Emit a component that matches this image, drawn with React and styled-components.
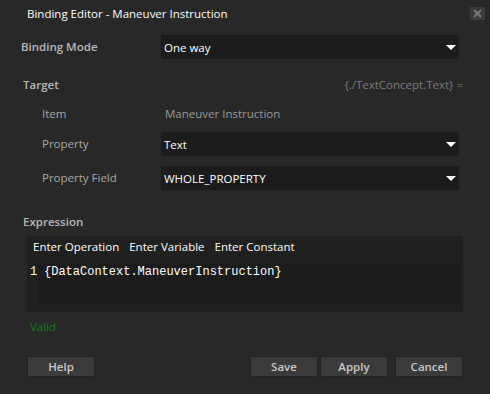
import styled, { createGlobalStyle } from "styled-components";

const Global = createGlobalStyle`
  html, body {
    margin: 0;
    padding: 0;
    background: #282828;
  }
  body {
    font-family: "Open Sans", "Noto Sans", sans-serif;
    font-size: 11.5px;
  }
`;

const Window = styled.div`
  width: 490px;
  height: 394px;
  background: #282828;
  display: flex;
  flex-direction: column;
  box-sizing: border-box;
`;

const TitleBar = styled.div`
  height: 27px;
  display: flex;
  align-items: center;
  justify-content: space-between;
  padding: 0 5px 1px 27px;
  color: #ffffff;
  font-size: 11.5px;
`;

const CloseBox = styled.div`
  width: 15px;
  height: 13px;
  background: #3a3a3a;
  display: flex;
  align-items: center;
  justify-content: center;
  margin-bottom: 1px;
`;

const Body = styled.div`
  display: flex;
  flex-direction: column;
  padding: 7px 27px 0 21px;
`;

const Row = styled.div`
  display: flex;
  align-items: center;
  height: ${(p) => p.$h || 24}px;
  margin-top: ${(p) => p.$mt || 0}px;
  padding-left: ${(p) => p.$indent || 0}px;
`;

const Label = styled.div`
  width: ${(p) => p.$w}px;
  flex-shrink: 0;
  margin-top: -1px;
  color: ${(p) => (p.$strong ? "#b8b8b8" : "#a8a8a8")};
  font-weight: ${(p) => (p.$strong ? 600 : 400)};
`;

const Value = styled.div`
  color: #9a9a9a;
  padding-left: 4px;
  margin-top: -1px;
`;

const Hint = styled.div`
  margin-left: auto;
  margin-top: -1px;
  color: #7c7c7c;
`;

const Select = styled.div`
  flex: 1;
  height: 24px;
  background: #1c1c1c;
  color: #ffffff;
  display: flex;
  align-items: center;
  justify-content: space-between;
  padding: 0 3px 0 3px;
  box-sizing: border-box;
  margin-right: 4px;
`;

const Caret = styled.span`
  width: 0;
  height: 0;
  border-left: 5px solid transparent;
  border-right: 5px solid transparent;
  border-top: 5px solid #ffffff;
  margin-top: 1px;
`;

const ExprBox = styled.div`
  margin: 2px 0 0 6px;
  height: 76px;
  background: #202020;
  display: flex;
  flex-direction: column;
  padding: 0 3px 8px 3px;
  box-sizing: border-box;
`;

const ExprToolbar = styled.div`
  height: 28px;
  display: flex;
  align-items: flex-start;
  padding: 3px 0 0 3px;
  box-sizing: border-box;
  gap: 10px;
  color: #ffffff;
`;

const Editor = styled.div`
  flex: 1;
  display: flex;
  font-family: "Liberation Mono", "Courier New", monospace;
  font-size: 12px;
  color: #ffffff;
`;

const Gutter = styled.div`
  width: 9px;
  padding-top: 1px;
  background: #202020;
`;

const Code = styled.div`
  flex: 1;
  background: #1c1c1c;
  padding: 1px 0 0 5px;
`;

const Valid = styled.div`
  color: #15801a;
  margin: 8px 0 0 9px;
  height: 14px;
  line-height: 14px;
`;

const ButtonBar = styled.div`
  display: flex;
  margin: 22px 0 0 6px;
`;

const Button = styled.button`
  width: 68px;
  height: 21px;
  background: #3b3b3b;
  border: 1px solid #222;
  border-radius: 2px;
  color: #c8c8c8;
  font-family: "Open Sans", "Noto Sans", sans-serif;
  font-size: 11.5px;
  font-weight: 600;
  padding: 0;
  margin-left: ${(p) => p.$ml || 0}px;
`;

export default function App() {
  return (
    <>
      <Global />
      <Window>
        <TitleBar>
          <span>Binding Editor - Maneuver Instruction</span>
          <CloseBox>
            <svg width="9" height="9" viewBox="0 0 9 9">
              <path d="M1 1 L8 8 M8 1 L1 8" stroke="#7a7a7a" strokeWidth="2" />
            </svg>
          </CloseBox>
        </TitleBar>
        <Body>
          <Row>
            <Label $w={140} $strong>Binding Mode</Label>
            <Select>
              One way
              <Caret />
            </Select>
          </Row>
          <Row $mt={14} $indent={2}>
            <Label $w={120} $strong>Target</Label>
            <Hint>{"{./TextConcept.Text} ="}</Hint>
          </Row>
          <Row $mt={5} $indent={21}>
            <Label $w={119}>Item</Label>
            <Value>Maneuver Instruction</Value>
          </Row>
          <Row $mt={6} $indent={21}>
            <Label $w={119}>Property</Label>
            <Select>
              Text
              <Caret />
            </Select>
          </Row>
          <Row $mt={10} $indent={21}>
            <Label $w={119}>Property Field</Label>
            <Select>
              WHOLE_PROPERTY
              <Caret />
            </Select>
          </Row>
          <Row $mt={20} $indent={2}>
            <Label $w={120} $strong>Expression</Label>
          </Row>
          <ExprBox>
            <ExprToolbar>
              <span>Enter Operation</span>
              <span>Enter Variable</span>
              <span>Enter Constant</span>
            </ExprToolbar>
            <Editor>
              <Gutter>1</Gutter>
              <Code>{"{DataContext.ManeuverInstruction}"}</Code>
            </Editor>
          </ExprBox>
          <Valid>Valid</Valid>
          <ButtonBar>
            <Button>Help</Button>
            <Button $ml={155}>Save</Button>
            <Button $ml={2}>Apply</Button>
            <Button $ml={7}>Cancel</Button>
          </ButtonBar>
        </Body>
      </Window>
    </>
  );
}
